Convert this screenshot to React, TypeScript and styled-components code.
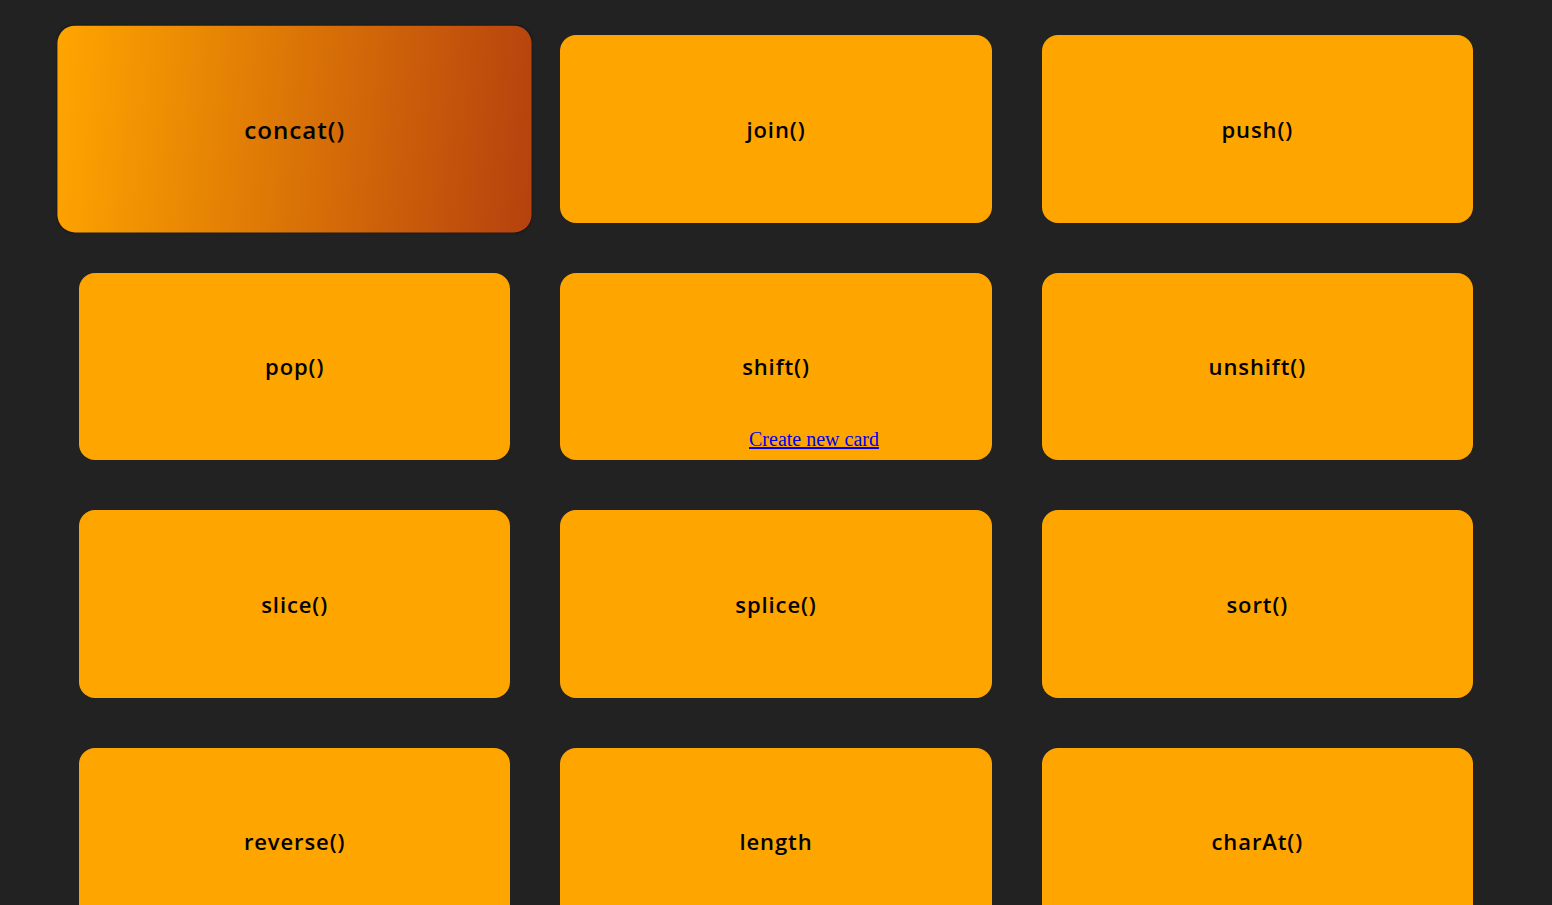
import React from "react";
import styled, { createGlobalStyle, css } from "styled-components";

const Global = createGlobalStyle`
  html, body {
    margin: 0;
    padding: 0;
    background: #222222;
  }
  body {
    font-family: "Liberation Serif", serif;
    overflow: hidden;
  }
`;

const Page = styled.main`
  position: relative;
  padding: 35px 79px;
  min-height: 905px;
  box-sizing: border-box;
`;

const Grid = styled.div`
  display: grid;
  grid-template-columns: repeat(3, 1fr);
  grid-auto-rows: 187.5px;
  gap: 50px;
`;

const Card = styled.div<{ $active?: boolean }>`
  display: flex;
  align-items: center;
  justify-content: center;
  background: #ffa500;
  border-radius: 16px;
  font-family: "Open Sans", "Noto Sans", sans-serif;
  font-weight: 600;
  font-size: 22px;
  color: #000;
  letter-spacing: 0.9px;
  ${(p) =>
    p.$active &&
    css`
      background: linear-gradient(95deg, #ffa500 0%, #e27e05 40%, #b6410e 100%);
      transform: scale(1.1);
      box-shadow: 0 0 2px rgba(0, 0, 0, 0.4);
    `}
`;

const NewCardLink = styled.a`
  position: absolute;
  top: 428px;
  left: 749px;
  font-family: "Liberation Serif", "Times New Roman", serif;
  font-size: 20px;
  color: #0000ee;
  text-decoration: underline;
`;

const items = [
  "concat()",
  "join()",
  "push()",
  "pop()",
  "shift()",
  "unshift()",
  "slice()",
  "splice()",
  "sort()",
  "reverse()",
  "length",
  "charAt()",
];

export default function App() {
  return (
    <>
      <Global />
      <Page>
        <Grid>
          {items.map((t, i) => (
            <Card key={t} $active={i === 0}>
              {t}
            </Card>
          ))}
        </Grid>
        <NewCardLink href="#">Create new card</NewCardLink>
      </Page>
    </>
  );
}
